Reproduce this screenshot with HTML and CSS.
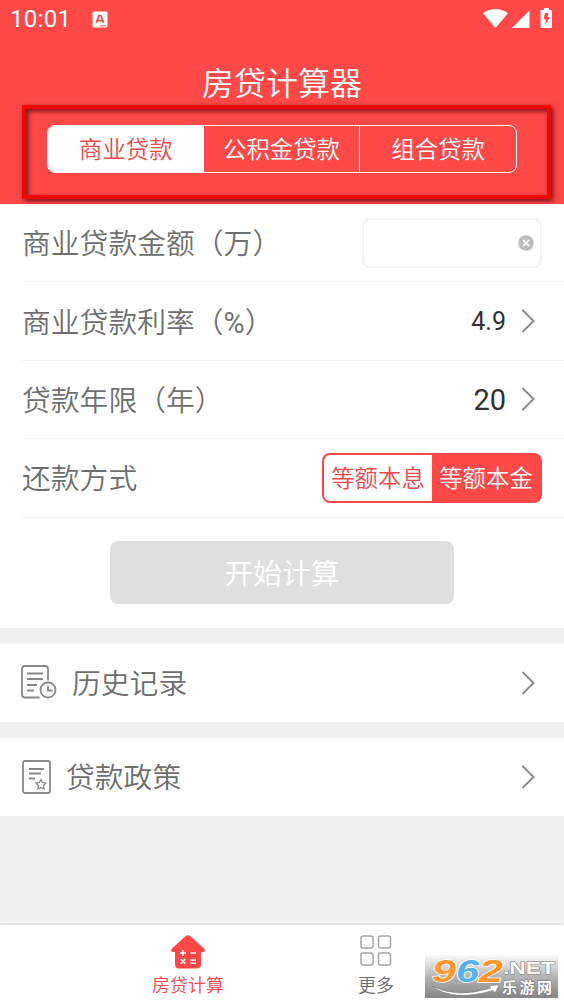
FILE: index.html
```html
<!DOCTYPE html>
<html lang="zh-CN">
<head>
<meta charset="utf-8">
<title>房贷计算器</title>
<link rel="stylesheet" href="styles.css">
</head>
<body>
<div class="app">
  <header class="header">
    <div class="status">
      <span class="clock">10:01</span>
      <svg class="status-app" width="16" height="17" viewBox="0 0 16 17"><rect x=".5" y=".5" width="15" height="16" rx="1.5" fill="#fff"/><path d="M4.2 12 7 4.5h1.8L11.6 12M5.500 9.600h4.800" fill="none" stroke="#f04848" stroke-width="1.700"/><path d="M8.500 14.700h5" stroke="#f04848" stroke-width="1.400" stroke-dasharray="1.300 .6"/></svg>
      <svg class="status-icons" width="72" height="22" viewBox="0 0 72 22" fill="#fff"><path d="M0 5.200Q12.500-3.200 25 5.200L12.500 20Z"/><path d="M29 20 46.500 2.500V20Z"/><path d="M61 0h5v2h2q1 0 1 1v16q0 1-1 1h-9.500q-1 0-1-1V3q0-1 1-1H61Z"/><path d="M62 5h3.500l-1.100 4h2.600l-4.700 8 .6-5.800h-2.300Z" fill="#ff4848"/></svg>
    </div>
    <h1 class="title">房贷计算器</h1>
    <div class="tabs">
      <span class="tab tab-active">商业贷款</span><span class="tab">公积金贷款</span><span class="tab">组合贷款</span>
    </div>
    <div class="callout"></div>
  </header>

  <main class="main">
    <section class="form">
      <div class="row">
        <span class="label">商业贷款金额（万）</span>
        <div class="amount"><svg width="16" height="16" viewBox="0 0 16 16"><circle cx="8" cy="8" r="7.800" fill="#bdbdbd"/><path d="m5 5 6 6m0-6-6 6" stroke="#fff" stroke-width="1.600"/></svg></div>
      </div>
      <div class="row">
        <span class="label">商业贷款利率（<span class="unit">%</span>）</span>
        <span class="value value-small">4.9</span>
        <svg class="chevron" width="14" height="24" viewBox="0 0 14 24"><path d="m1.500 1 11 11-11 11"/></svg>
      </div>
      <div class="row">
        <span class="label">贷款年限（年）</span>
        <span class="value">20</span>
        <svg class="chevron" width="14" height="24" viewBox="0 0 14 24"><path d="m1.500 1 11 11-11 11"/></svg>
      </div>
      <div class="row">
        <span class="label">还款方式</span>
        <div class="method"><span class="option">等额本息</span><span class="option option-active">等额本金</span></div>
      </div>
      <div class="submit">开始计算</div>
    </section>

    <div class="link">
      <svg class="link-icon" width="36" height="35" viewBox="0 0 36 35"><path d="M18.500 32.500H4q-3 0-3-3V4q0-3 3-3h20q3 0 3 3v11.500M6 8.500h16M6 14h16M6 20h10M6 25.500h7"/><circle cx="27" cy="25" r="7.500"/><path d="M27 20.500v5h4.500"/></svg>
      <span class="label">历史记录</span>
      <svg class="chevron" width="14" height="24" viewBox="0 0 14 24"><path d="m1.500 1 11 11-11 11"/></svg>
    </div>
    <div class="link link-policy">
      <svg class="link-icon" width="29" height="34" viewBox="0 0 29 34"><rect x="1" y="1" width="27" height="32" rx="2"/><path d="M7 9h15M7 13.500h12M7 18.500h6"/><path class="star" d="m19 19.500 1.600 3 3.300.6-2.300 2.400.4 3.300-3-1.400-3 1.400.4-3.300-2.300-2.400 3.300-.6Z"/></svg>
      <span class="label">贷款政策</span>
      <svg class="chevron" width="14" height="24" viewBox="0 0 14 24"><path d="m1.500 1 11 11-11 11"/></svg>
    </div>
  </main>

  <nav class="nav">
    <div class="nav-item nav-active">
      <svg width="36" height="34" viewBox="0 0 36 34"><path d="M15.500 1.300q2.500-2 5 0L34.500 14q1.300 2.500-1.500 3h-2v12.500q0 4-4 4H9q-4 0-4-4V17H3q-2.800-.5-1.500-3Z" fill="#ff4848"/><path d="M10 18h6M13 15v6M20.500 18h5.500M10.700 24l4.600 4.600m0-4.600-4.600 4.600M20.500 25h5.500m-5.500 3.200h5.500" stroke="#fff" stroke-width="1.600"/></svg>
      <span>房贷计算</span>
    </div>
    <div class="nav-item">
      <svg width="32" height="32" viewBox="0 0 32 32" fill="none" stroke="#a5a5a5" stroke-width="1.500"><rect x="1" y="1" width="12" height="12" rx="2"/><rect x="18.500" y="1" width="12" height="12" rx="2"/><rect x="1" y="18" width="12" height="12" rx="2"/><rect x="18.500" y="18" width="12" height="12" rx="2"/></svg>
      <span>更多</span>
    </div>
  </nav>

  <svg class="watermark" width="133" height="43" viewBox="0 0 133 43">
    <defs><linearGradient id="shade" x1="0" y1="0" x2="0" y2="1"><stop offset="0" stop-color="#fafafa"/><stop offset=".5" stop-color="#b5b5b5"/><stop offset="1" stop-color="#858585"/></linearGradient></defs>
    <rect width="133" height="43" fill="url(#shade)"/>
    <path d="M7 31Q32 44 66 33L64 30.500 74 30 70 38 68 35.500Q28 47 7 31Z" fill="#fff" stroke="#777" stroke-width=".5"/>
    <g class="mark-num"><text x="7" y="27" textLength="24" lengthAdjust="spacingAndGlyphs" fill="#ff962d">9</text><text x="31" y="27" textLength="23" lengthAdjust="spacingAndGlyphs" fill="#57b2e8">6</text><text x="54" y="27" textLength="24" lengthAdjust="spacingAndGlyphs" fill="#ff962d">2</text></g>
    <text class="mark-net" x="78" y="19" textLength="52" lengthAdjust="spacingAndGlyphs">.NET</text>
    <text class="mark-cn" x="77" y="38" textLength="50">乐游网</text>
  </svg>
</div>
</body>
</html>
```
FILE: styles.css
```css
* { box-sizing: border-box; }
body { margin: 0; background: #f0f0f0; }
.app {
  position: relative;
  display: flex;
  flex-direction: column;
  width: 564px;
  height: 1004px;
  overflow: hidden;
  font-family: Roboto, "Noto Sans CJK SC DemiLight", "Noto Sans CJK SC", sans-serif;
  font-weight: 350;
  color: #6e6e6e;
}
svg { display: block; flex: none; }

.header {
  position: relative;
  height: 204px;
  padding: 0 47px;
  background: #ff4848;
  color: #fff;
}
.status {
  display: flex;
  align-items: center;
  height: 38px;
  margin: 0 -37px;
}
.clock { font-size: 24px; font-weight: 400; width: 82px; letter-spacing: .3px; }
.status-icons { margin: 0 -1px 0 auto; }
.title {
  margin: 22px 0 0;
  height: 48px;
  line-height: 48px;
  font-size: 32px;
  font-weight: inherit;
  text-align: center;
}
.tabs {
  display: flex;
  height: 48px;
  margin-top: 17px;
  border: 1.500px solid #fff;
  border-radius: 8px;
  background: #ff4848;
  overflow: hidden;
}
.tab {
  flex: 1;
  line-height: 48px;
  font-size: 23.400px;
  text-align: center;
}
.tab + .tab + .tab { border-left: 1.500px solid #fff; }
.tab-active { background: #fff; color: #ee4848; }
.callout {
  position: absolute;
  left: 22px;
  top: 105px;
  width: 529px;
  height: 94px;
  border: 4px solid #f20505;
  box-shadow: 2px 2px 5px rgba(60, 0, 0, .75), inset 2px 2px 5px rgba(60, 0, 0, .75);
}

.form { height: 424px; background: #fff; }
.row {
  display: flex;
  align-items: center;
  height: 78.400px;
  margin-left: 22px;
  padding-right: 22px;
  border-bottom: 1px solid #f3f3f3;
}
.label { flex: 1; font-size: 28.800px; white-space: nowrap; padding-bottom: 2px; }
.unit { font-weight: 400; }
.amount {
  display: flex;
  align-items: center;
  justify-content: flex-end;
  width: 180px;
  height: 50px;
  padding-right: 6px;
  border: 2px solid #f3f3f3;
  border-radius: 8px;
}
.value { margin-right: 15px; padding-top: 1px; font-size: 29px; font-weight: 400; color: #333; }
.value-small { font-size: 25px; }
.chevron { margin-right: 7px; fill: none; stroke: #888; stroke-width: 1.900; }
.method {
  display: flex;
  width: 220px;
  height: 50px;
  border: 2px solid #f54949;
  border-radius: 8px;
  background: #ff4848;
  overflow: hidden;
}
.option {
  flex: 1;
  line-height: 48px;
  font-size: 23.400px;
  text-align: center;
  background: #fff;
  color: #ee4848;
}
.option-active { background: #ff4848; color: #fff; }
.submit {
  width: 344px;
  height: 63px;
  margin: 23px auto 0;
  border-radius: 8px;
  background: #dfdfdf;
  color: #fff;
  font-size: 28.800px;
  line-height: 66px;
  text-align: center;
}
.link {
  display: flex;
  align-items: center;
  height: 79px;
  margin-top: 15px;
  padding: 0 22px 0 21px;
  background: #fff;
}
.link-policy { height: 78px; margin-top: 16px; }
.link-icon { margin-right: 15px; fill: none; stroke: #888; stroke-width: 1.800; }
.link-policy .link-icon { margin: 0 15px 1px 1px; }
.link-policy .label { padding-bottom: 4px; }
.star { stroke-width: 1.300; }

.nav {
  display: flex;
  height: 79px;
  margin-top: auto;
  background: #fff;
  box-shadow: 0 -1px 2px rgba(0, 0, 0, .08);
}
.nav-item {
  display: flex;
  flex-direction: column;
  align-items: center;
  width: 188px;
  padding-top: 10px;
  font-size: 18px;
}
.nav-item span { margin-top: auto; height: 30px; line-height: 24px; }
.nav-active { margin-left: 94px; color: #ee4848; }

.watermark { position: absolute; left: 425px; top: 955px; overflow: visible; }
.mark-num { font: italic 700 32px "Liberation Sans", sans-serif; stroke: #fff; stroke-width: 1.500px; paint-order: stroke; }
.mark-net { font: 700 17px "Liberation Sans", sans-serif; fill: #fff; stroke: #777; stroke-width: 1px; paint-order: stroke; }
.mark-cn { font: 700 15px "Noto Sans CJK SC", sans-serif; fill: #fff; stroke: #777; stroke-width: 1px; paint-order: stroke; }
```
